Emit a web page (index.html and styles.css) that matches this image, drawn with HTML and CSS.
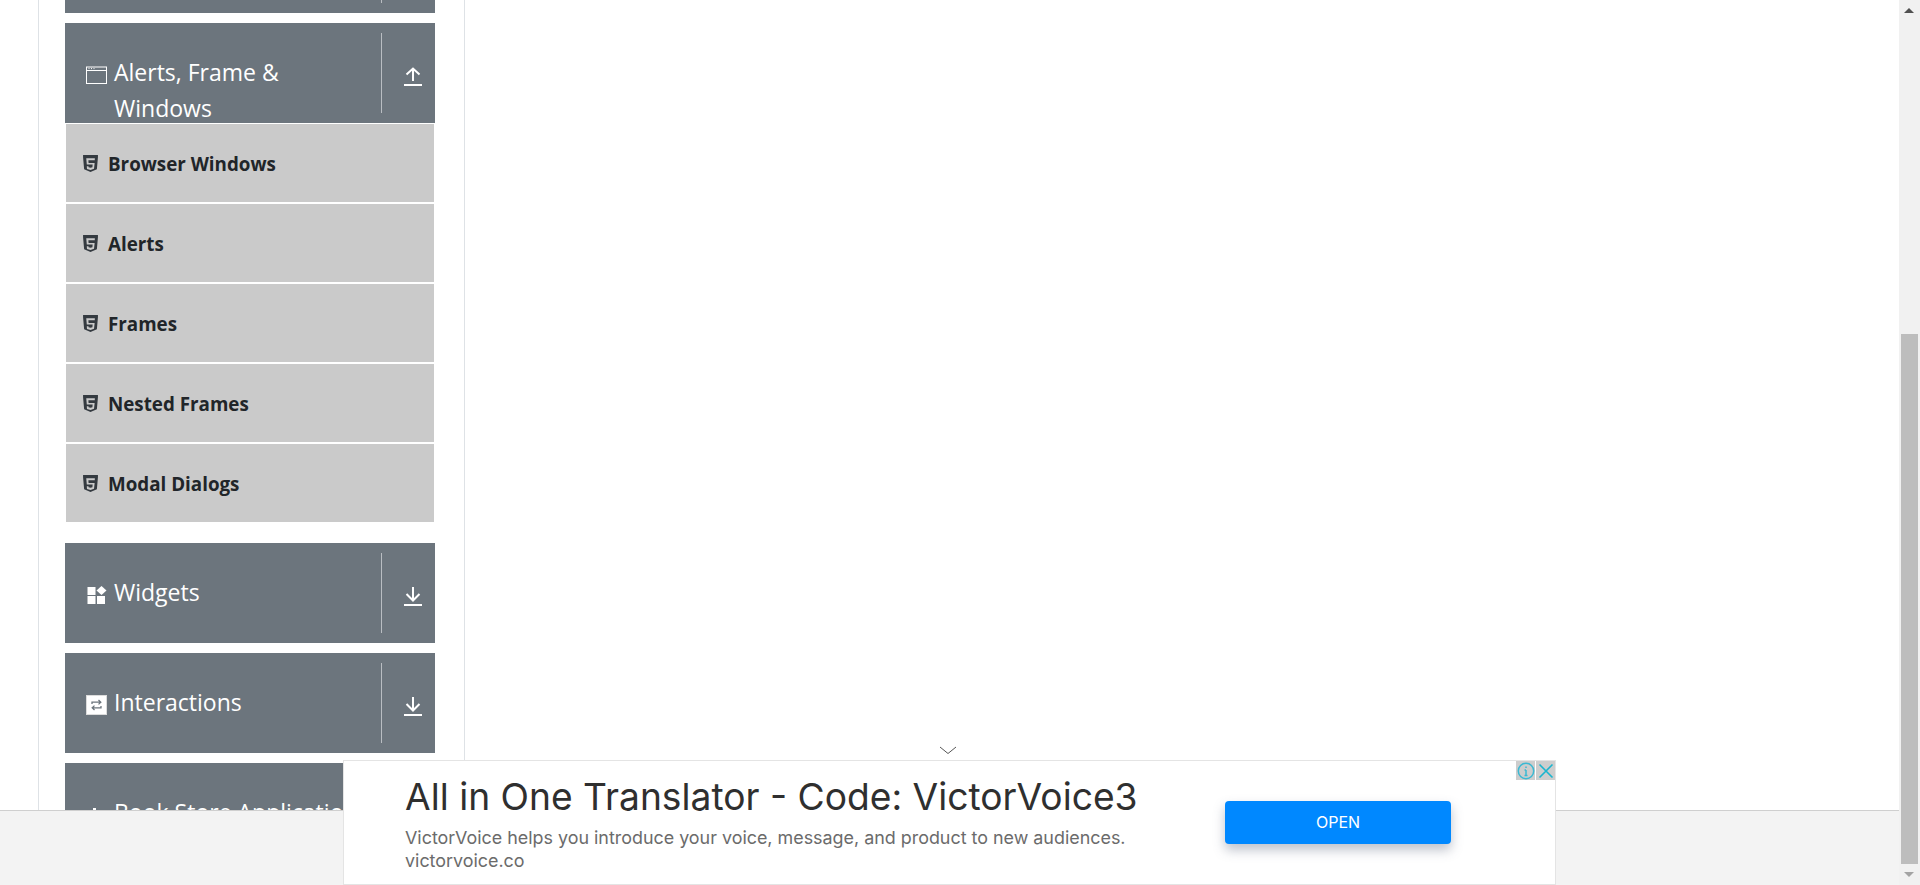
FILE: index.html
```html
<!DOCTYPE html>
<html lang="en">

<head>
    <meta charset="UTF-8">
    <meta name="viewport" content="width=device-width, initial-scale=1.0">
    <title>Alerts, Frame &amp; Windows</title>
    <link rel="stylesheet" href="styles.css">
</head>

<body>
    <div class="page">
        <aside class="sidebar">
            <div class="group group-cut">
                <span class="divider divider-cut"></span>
            </div>

            <div class="group group-open">
                <div class="group-title">
                    <svg class="group-icon" viewBox="0 0 21 18" fill="none" stroke="#fff">
                        <rect x="0.5" y="1" width="20" height="16.5" />
                        <path d="M0.5 4.5h20" />
                        <path d="M2.5 2.6h1M5 2.6h1M7.5 2.6h1" />
                    </svg>
                    <span>Alerts, Frame &amp; Windows</span>
                </div>
                <span class="divider"></span>
                <svg class="arrow" viewBox="0 0 18 19" fill="none" stroke="#fff" stroke-width="2">
                    <path d="M9 14V1.5M2.5 7.5 9 1.5l6.500 6" />
                    <path d="M0 18h18" />
                </svg>
            </div>

            <ul class="items">
                <li class="item">
                    <svg class="html5" viewBox="0 0 14 16"><path fill-rule="evenodd" d="M0 0h14v2l-1 11.500-6 2.500-6-2.500L0 2zM3 3l.5 6H9l-.2 2.500-1.800.6-1.800-.6-.1-1H3.500l.2 2.600L7 14l3.300-1 .6-5.500H5.200L5 5h6l.1-2z" /></svg>
                    Browser Windows
                </li>
                <li class="item">
                    <svg class="html5" viewBox="0 0 14 16"><path fill-rule="evenodd" d="M0 0h14v2l-1 11.500-6 2.500-6-2.500L0 2zM3 3l.5 6H9l-.2 2.500-1.800.6-1.800-.6-.1-1H3.500l.2 2.600L7 14l3.300-1 .6-5.500H5.200L5 5h6l.1-2z" /></svg>
                    Alerts
                </li>
                <li class="item">
                    <svg class="html5" viewBox="0 0 14 16"><path fill-rule="evenodd" d="M0 0h14v2l-1 11.500-6 2.500-6-2.500L0 2zM3 3l.5 6H9l-.2 2.500-1.800.6-1.800-.6-.1-1H3.500l.2 2.600L7 14l3.300-1 .6-5.500H5.200L5 5h6l.1-2z" /></svg>
                    Frames
                </li>
                <li class="item">
                    <svg class="html5" viewBox="0 0 14 16"><path fill-rule="evenodd" d="M0 0h14v2l-1 11.500-6 2.500-6-2.500L0 2zM3 3l.5 6H9l-.2 2.500-1.800.6-1.800-.6-.1-1H3.500l.2 2.600L7 14l3.300-1 .6-5.500H5.200L5 5h6l.1-2z" /></svg>
                    Nested Frames
                </li>
                <li class="item">
                    <svg class="html5" viewBox="0 0 14 16"><path fill-rule="evenodd" d="M0 0h14v2l-1 11.500-6 2.500-6-2.500L0 2zM3 3l.5 6H9l-.2 2.500-1.800.6-1.800-.6-.1-1H3.500l.2 2.600L7 14l3.300-1 .6-5.500H5.200L5 5h6l.1-2z" /></svg>
                    Modal Dialogs
                </li>
            </ul>

            <div class="group">
                <div class="group-title">
                    <svg class="group-icon" viewBox="0 0 21 18" fill="#fff">
                        <rect x="1.500" y="1" width="8" height="8" />
                        <rect x="1.500" y="10" width="8" height="8" />
                        <rect x="11" y="10" width="8" height="8" />
                        <path d="M15.500 0 20.500 4.500 15.500 9 10.500 4.500z" />
                    </svg>
                    <span>Widgets</span>
                </div>
                <span class="divider"></span>
                <svg class="arrow" viewBox="0 0 18 19" fill="none" stroke="#fff" stroke-width="2">
                    <path d="M9 0v13M2.500 7 9 13.500 15.500 7" />
                    <path d="M0 18h18" />
                </svg>
            </div>

            <div class="group">
                <div class="group-title">
                    <svg class="group-icon icon-tall" viewBox="0 0 21 20">
                        <rect x="0.500" y="0.500" width="20" height="19" fill="#fff" stroke="#dcdcdc" />
                        <path d="M6 9V7.200h8.500M12.500 5l2.300 2.200-2.300 2.200M15 11v1.800H6.500M8.500 15l-2.300-2.200 2.300-2.200" fill="none" stroke="#6c757d" stroke-width="1.300" />
                    </svg>
                    <span>Interactions</span>
                </div>
                <span class="divider"></span>
                <svg class="arrow" viewBox="0 0 18 19" fill="none" stroke="#fff" stroke-width="2">
                    <path d="M9 0v13M2.500 7 9 13.500 15.500 7" />
                    <path d="M0 18h18" />
                </svg>
            </div>

            <div class="group">
                <div class="group-title">
                    <svg class="group-icon" viewBox="0 0 21 18" fill="#fff">
                        <rect x="1" y="6" width="3" height="10" />
                        <rect x="7" y="2" width="3" height="14" />
                        <rect x="13" y="6" width="3" height="10" />
                    </svg>
                    <span class="nowrap">Book Store Application</span>
                </div>
            </div>
        </aside>
    </div>

    <div class="scrollbar">
        <span class="scroll-btn"><span class="tri-up"></span></span>
        <div class="track"><div class="thumb"></div></div>
        <span class="scroll-btn"><span class="tri-down"></span></span>
    </div>

    <footer class="footer"></footer>

    <svg class="ad-toggle" viewBox="0 0 18 9" fill="none" stroke="#555">
        <path d="M1 1l8 6.500L17 1" />
    </svg>

    <div class="ad">
        <div class="ad-badges">
            <span class="badge">
                <svg viewBox="0 0 18 18" fill="none" stroke="#3bb9d3" stroke-width="1.500">
                    <circle cx="9" cy="9" r="7.700" />
                    <path d="M9 8v5.500M7.500 13.500h3M7.500 8H9" />
                    <path d="M9 4.500v1.600" />
                </svg>
            </span>
            <span class="badge">
                <svg viewBox="0 0 18 18" fill="none" stroke="#19b5cf" stroke-width="1.600">
                    <path d="M2.500 2.500l13 13M15.500 2.500l-13 13" />
                </svg>
            </span>
        </div>
        <div class="ad-text">
            <h2 class="ad-title">All in One Translator - Code: VictorVoice3</h2>
            <p class="ad-desc">VictorVoice helps you introduce your voice, message, and product to new audiences.</p>
            <p class="ad-desc">victorvoice.co</p>
        </div>
        <button class="ad-btn">OPEN</button>
    </div>
</body>

</html>
```

FILE: styles.css
```css
* {
    box-sizing: border-box;
}

html,
body {
    margin: 0;
    height: 885px;
    overflow: hidden;
}

body {
    display: flex;
    background-color: #fff;
    font-family: "Open Sans", "Noto Sans", sans-serif;
}

.page {
    flex: 1;
    padding-left: 38px;
}

.sidebar {
    width: 427px;
    height: 885px;
    padding: 0 29px 0 26px;
    border-left: 1px solid #dee2e6;
    border-right: 1px solid #dee2e6;
}

.group {
    display: flex;
    align-items: flex-start;
    height: 100px;
    margin-bottom: 10px;
    padding: 10px 13px 10px 21px;
    background-color: #6c757d;
    color: #fff;
}

.group-cut {
    height: 13px;
    padding: 0;
    justify-content: flex-end;
}

.group-open {
    margin-bottom: 1px;
    overflow: hidden;
}

.group-title {
    display: flex;
    align-items: flex-start;
    flex: 1;
    gap: 7px;
    min-width: 0;
    font-size: 23px;
    line-height: 36px;
    padding-top: 21px;
}

.group-title span {
    width: 230px;
}

.nowrap {
    white-space: nowrap;
}

.group-icon {
    flex: none;
    width: 21px;
    height: 18px;
    margin-top: 12px;
}

.icon-tall {
    height: 20px;
    margin-top: 11px;
}

.divider {
    flex: none;
    width: 1px;
    height: 80px;
    margin-right: 22px;
    background-color: #b9bdc2;
}

.divider-cut {
    height: 3px;
    margin-right: 53px;
}

.arrow {
    flex: none;
    width: 18px;
    height: 19px;
    margin-top: 34px;
}

.items {
    list-style: none;
    margin: 0 0 21px;
    padding: 0 1px;
}

.item {
    display: flex;
    align-items: center;
    gap: 10px;
    height: 78px;
    margin-bottom: 2px;
    padding: 2px 0 0 17px;
    background-color: #cacaca;
    color: #212529;
    font-size: 18.800px;
    font-weight: 700;
}

.item:last-child {
    margin-bottom: 0;
}

.html5 {
    flex: none;
    width: 15px;
    height: 17px;
    margin-top: -2px;
    fill: #343a40;
}

/* barra de scroll */
.scrollbar {
    flex: none;
    display: flex;
    flex-direction: column;
    width: 21px;
    height: 885px;
    padding-right: 2px;
    background-color: #f1f1f1;
}

.scroll-btn {
    flex: none;
    display: flex;
    align-items: center;
    justify-content: center;
    height: 21px;
}

.tri-up {
    border-left: 5px solid transparent;
    border-right: 5px solid transparent;
    border-bottom: 5px solid #505050;
}

.tri-down {
    border-left: 5px solid transparent;
    border-right: 5px solid transparent;
    border-top: 5px solid #a3a3a3;
}

.track {
    flex: 1;
    display: flex;
    flex-direction: column;
    justify-content: flex-end;
    padding-left: 2px;
}

.thumb {
    height: 530px;
    background-color: #bdbdbd;
}

.footer {
    position: fixed;
    left: 0;
    right: 21px;
    bottom: 0;
    height: 75px;
    background-color: #f3f3f3;
    border-top: 1px solid #cfcfcf;
}

/* anuncio */
.ad-toggle {
    position: fixed;
    left: 939px;
    top: 746px;
    width: 18px;
    height: 9px;
}

.ad {
    position: fixed;
    left: 343px;
    top: 760px;
    width: 1213px;
    height: 125px;
    display: flex;
    align-items: flex-start;
    padding: 0 0 0 61px;
    background-color: #fff;
    border: 1px solid #e4e4e4;
}

.ad-badges {
    position: absolute;
    top: 0;
    right: 0;
    display: flex;
    gap: 1px;
}

.badge {
    display: flex;
    align-items: center;
    justify-content: center;
    width: 19px;
    height: 19px;
    background-color: #cdcdcd;
}

.badge svg {
    width: 18px;
    height: 18px;
}

.ad-text {
    width: 820px;
    padding-top: 11px;
}

.ad-title {
    margin: 0 0 4px;
    font-family: "Inter", "Roboto", sans-serif;
    font-size: 37.200px;
    font-weight: 400;
    line-height: 50px;
    color: #2f2f2f;
    white-space: nowrap;
}

.ad-desc {
    margin: 0;
    font-family: "Inter", "Roboto", sans-serif;
    font-size: 17.900px;
    line-height: 23px;
    color: #6b6b6b;
    white-space: nowrap;
}

.ad-btn {
    width: 226px;
    height: 43px;
    margin-top: 40px;
    padding: 0 0 2px;
    border: 0;
    border-radius: 4px;
    background-color: #0088ff;
    box-shadow: 0 6px 12px rgba(70, 80, 110, 0.35);
    color: #fff;
    font-family: "Inter", "Roboto", sans-serif;
    font-size: 16px;
}
```
